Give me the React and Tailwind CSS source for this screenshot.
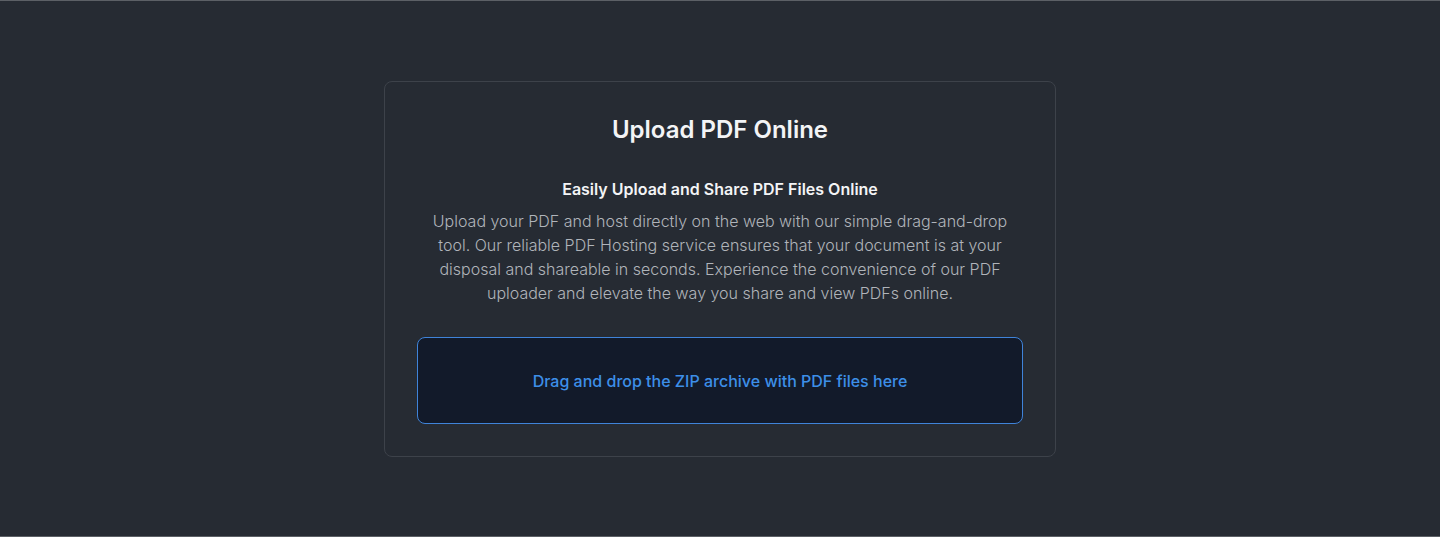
export default function App() {
  return (
    <div
      className="min-h-[537px] flex items-center justify-center bg-[#262b33] border-t border-b border-[#5c6066]"
      style={{ fontFamily: "Inter, 'Liberation Sans', sans-serif" }}
    >
      <div className="w-[672px] rounded-lg border border-[#3d424a] bg-[#262b33] p-8 text-center">
        <h1 className="text-2xl font-semibold text-[#f3f4f6]">Upload PDF Online</h1>
        <h2 className="mt-[31px] text-base font-semibold text-[#f3f4f6]">
          Easily Upload and Share PDF Files Online
        </h2>
        <p className="mx-auto mt-2 max-w-xl text-base font-light leading-6 text-[#b0b4ba]">
          Upload your PDF and host directly on the web with our simple drag-and-drop tool. Our
          reliable PDF Hosting service ensures that your document is at your disposal and
          shareable in seconds. Experience the convenience of our PDF uploader and elevate the
          way you share and view PDFs online.
        </p>
        <div className="mt-8 rounded-lg border border-[#3f83d9] bg-[#121a2a] pt-[31px] pb-[30px]">
          <span className="text-base font-medium text-[#3d8fe8]">
            Drag and drop the ZIP archive with PDF files here
          </span>
        </div>
      </div>
    </div>
  );
}
